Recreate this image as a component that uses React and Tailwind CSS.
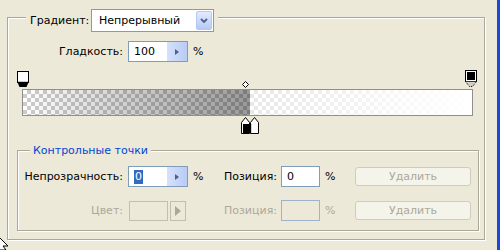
import React from "react";

function SpinInput({ value, selected }) {
  return (
    <div className="w-[60px] h-[21px] border border-[#7f9db9] bg-white flex">
      <div className="flex-1 flex items-center pl-[5px]">
        {selected ? (
          <span className="bg-[#316ac5] text-white h-[14px] flex items-center px-[1px]">{value}</span>
        ) : (
          <span>{value}</span>
        )}
      </div>
      <div className="w-[20px] h-full bg-gradient-to-r from-[#d6e1fb] to-[#b9cbf5] flex items-center justify-center">
        <svg width="4" height="6" viewBox="0 0 4 6">
          <polygon points="0,0 4,3 0,6" fill="#4d6185" />
        </svg>
      </div>
    </div>
  );
}

function DisabledButton() {
  return (
    <div className="w-[116px] h-[19px] border border-[#cfccbd] rounded-[3px] bg-[#f5f4ea] text-[#aca899] flex items-center justify-center">
      Удалить
    </div>
  );
}

export default function App() {
  return (
    <div className="w-[500px] h-[250px] bg-[#ece9d8] flex overflow-hidden relative font-['DejaVu_Sans',sans-serif] text-[11px] text-black leading-none">
      <div className="w-[497px] h-full pt-[17px] pl-[7px]">
        {/* outer group */}
        <div className="relative w-[478px] h-[223px] border border-[#aca899] shadow-[inset_1px_1px_0_#fff,1px_1px_0_#fff] pt-[23px] flex flex-col">
          {/* legend: gradient type */}
          <div className="absolute left-[18px] top-[-9px] flex items-center bg-[#ece9d8] pl-[4px] pr-[4px]">
            <span className="w-[61px]">Градиент:</span>
            <div className="w-[123px] h-[23px] border border-[#7f9db9] bg-white flex items-center">
              <span className="flex-1 pl-[7px]">Непрерывный</span>
              <div className="w-[16px] h-[19px] mr-[1px] rounded-[2px] border border-[#b4c8f6] bg-gradient-to-b from-[#e3ebfe] to-[#b4c8f6] flex items-center justify-center">
                <svg width="8" height="6" viewBox="0 0 8 6">
                  <polyline points="1,1 4,4 7,1" fill="none" stroke="#4d6185" strokeWidth="1.8" />
                </svg>
              </div>
            </div>
          </div>

          {/* smoothness */}
          <div className="flex items-center h-[21px]">
            <span className="w-[115px] text-right">Гладкость:</span>
            <div className="ml-[5px]">
              <SpinInput value="100" />
            </div>
            <span className="ml-[5px]">%</span>
          </div>

          {/* gradient widget */}
          <div className="relative mt-[8px] ml-[9px] w-[461px] h-[63px] pt-[19px]">
            <div className="ml-[5px] w-[451px] h-[27px] border border-[#8f8f8f] flex">
              <div className="w-[227px] h-full bg-[image:linear-gradient(to_right,rgba(0,0,0,0),rgba(0,0,0,0.4)),repeating-conic-gradient(#cccccc_0_25%,#ffffff_0_50%)] bg-[length:100%_100%,8px_8px]"></div>
              <div className="flex-1 h-full bg-[image:linear-gradient(to_right,rgba(255,255,255,0.55),rgba(255,255,255,1)),repeating-conic-gradient(#cccccc_0_25%,#ffffff_0_50%)] bg-[length:100%_100%,8px_8px]"></div>
            </div>

            {/* opacity stop left (selected) */}
            <svg className="absolute left-0 top-[1px]" width="13" height="17" viewBox="0 0 13 17">
              <rect x="0.5" y="0.5" width="11" height="11" fill="#fff" stroke="#000" />
              <rect x="1" y="10" width="10" height="1" fill="#c8c8c8" />
              <polygon points="0.5,11.5 11.5,11.5 9.5,16 2.5,16" fill="#000" />
            </svg>
            {/* opacity stop right */}
            <svg className="absolute left-[448px] top-0" width="13" height="18" viewBox="0 0 13 18">
              <rect x="0.5" y="0.5" width="11" height="11" fill="#fff" stroke="#000" />
              <rect x="2" y="2" width="8" height="8" fill="#000" />
              <polygon points="0.5,11.5 11.5,11.5 7.5,16.5 4.5,16.5" fill="#d4d0c8" stroke="#000" strokeWidth="1" strokeDasharray="1 1" />
            </svg>
            {/* midpoint diamond */}
            <svg className="absolute left-[225px] top-[11px]" width="7" height="7" viewBox="0 0 7 7">
              <polygon points="3.5,0.5 6.5,3.5 3.5,6.5 0.5,3.5" fill="#fff" stroke="#000" />
            </svg>
            {/* color stops */}
            <svg className="absolute left-[224px] top-[47px]" width="19" height="17" viewBox="0 0 19 17">
              <polygon points="0.5,16.5 0.5,5.5 4.5,0.5 8.5,5.5 8.5,16.5" fill="#fff" stroke="#000" />
              <rect x="2" y="7" width="6" height="9" fill="#000" />
              <polygon points="9.5,16.5 9.5,5.5 13.5,0.5 17.5,5.5 17.5,16.5" fill="#fff" stroke="#000" />
              <rect x="10" y="7" width="1" height="9" fill="#d0d0d0" />
            </svg>
          </div>

          {/* inner group: control points */}
          <div className="relative mt-[17px] ml-[9px] w-[462px] h-[81px] border border-[#aca899] shadow-[inset_1px_1px_0_#fff,1px_1px_0_#fff] pt-[15px]">
            <div className="absolute left-[12px] top-[-8px] h-[14px] flex items-center bg-[#ece9d8] px-[3px] text-[#0046d5]">
              Контрольные точки
            </div>

            {/* row 1 */}
            <div className="flex items-center h-[21px]">
              <span className="w-[105px] text-right">Непрозрачность:</span>
              <div className="ml-[5px]">
                <SpinInput value="0" selected />
              </div>
              <span className="ml-[5px] w-[31px]">%</span>
              <span className="w-[52px] text-right">Позиция:</span>
              <div className="ml-[5px] w-[39px] h-[21px] border border-[#7f9db9] bg-white flex items-center pl-[5px]">0</div>
              <span className="ml-[5px] w-[30px]">%</span>
              <DisabledButton />
            </div>

            {/* row 2 */}
            <div className="flex items-center h-[21px] mt-[13px] text-[#aca899]">
              <span className="w-[105px] text-right">Цвет:</span>
              <div className="ml-[5px] w-[96px] flex items-center">
                <div className="ml-[1px] w-[39px] h-[20px] border border-[#c2bfae]"></div>
                <div className="ml-[2px] w-[16px] h-[20px] border border-[#c2bfae] flex items-center justify-center">
                  <svg width="6" height="10" viewBox="0 0 6 10">
                    <polygon points="0,0 6,5 0,10" fill="#aca899" />
                  </svg>
                </div>
              </div>
              <span className="w-[52px] text-right">Позиция:</span>
              <div className="ml-[5px] w-[39px] h-[21px] border border-[#9fb4cc]"></div>
              <span className="ml-[5px] w-[30px]">%</span>
              <DisabledButton />
            </div>
          </div>
        </div>
      </div>
      <div className="w-[3px] h-full bg-[#1c46dc]"></div>

      {/* mouse cursor */}
      <svg className="absolute left-0 top-[235px]" width="10" height="15" viewBox="0 0 10 15">
        <polygon points="-3,0 8,11 3,11 6,15 -3,15" fill="#fff" stroke="#000" strokeWidth="1" />
      </svg>
    </div>
  );
}
